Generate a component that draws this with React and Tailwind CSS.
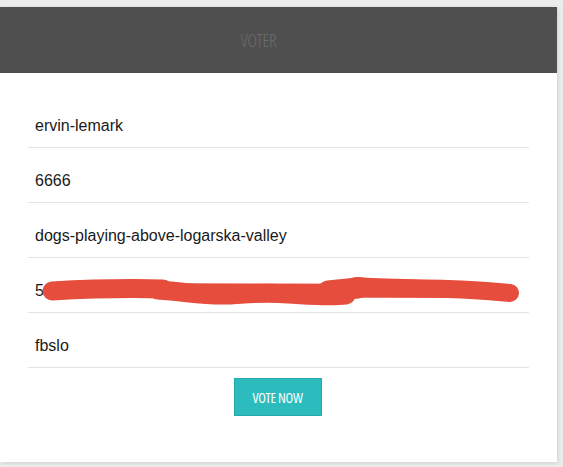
import React from "react";

const rows = ["ervin-lemark", "6666", "dogs-playing-above-logarska-valley", "5", "fbslo"];

export default function App() {
  return (
    <div className="min-h-[467px] bg-[#ececec] pt-[7px]" style={{ fontFamily: "'Liberation Sans', Arial, sans-serif" }}>
      <div className="w-[557px] h-[455px] bg-white shadow-[1px_1px_4px_rgba(0,0,0,0.12)]">
        <div className="h-[66px] bg-[#4f4f4f] flex items-center justify-center">
          <span
            className="text-[18px] text-[#6c6c6c] font-light tracking-[-0.4px] ml-[-40px]"
            style={{ fontFamily: "'Open Sans', sans-serif", fontStretch: "condensed" }}
          >
            VOTER
          </span>
        </div>
        <div className="px-[28px] pt-[20px]">
          {rows.map((r, i) => (
            <div key={i} className="relative h-[55px] border-b border-[#e3e3e3] pl-[7px] pt-[23px]">
              <div className="text-[16px] leading-[20px] text-[#1a1a1a]">{r}</div>
              {i === 3 && (
                <svg className="absolute left-0 top-0" width="500" height="55" viewBox="0 0 500 55">
                  <g stroke="#e64d3d" strokeLinecap="round" strokeLinejoin="round" fill="none">
                    <path d="M24 33 C60 31 100 30 135 31" strokeWidth="19" />
                    <path d="M130 32 C160 34 175 38 200 37 C220 36 235 34 260 36 C280 37 300 39 318 37" strokeWidth="19" />
                    <path d="M310 35 C320 32 325 27 330 28 C345 30 380 30 420 31 C450 32 470 34 482 35" strokeWidth="18" />
                    <path d="M300 33 L330 30" strokeWidth="21" />
                    <path d="M70 32 L480 33" strokeWidth="14" />
                  </g>
                </svg>
              )}
            </div>
          ))}
          <div className="flex justify-center pt-[10px]">
            <button
              className="w-[88px] h-[38px] bg-[#2dbcbd] border border-[#26a9aa] text-white text-[14px] tracking-[-0.3px] ml-[-2px]"
              style={{ fontFamily: "'Open Sans', sans-serif", fontStretch: "condensed" }}
            >
              VOTE NOW
            </button>
          </div>
        </div>
      </div>
    </div>
  );
}
